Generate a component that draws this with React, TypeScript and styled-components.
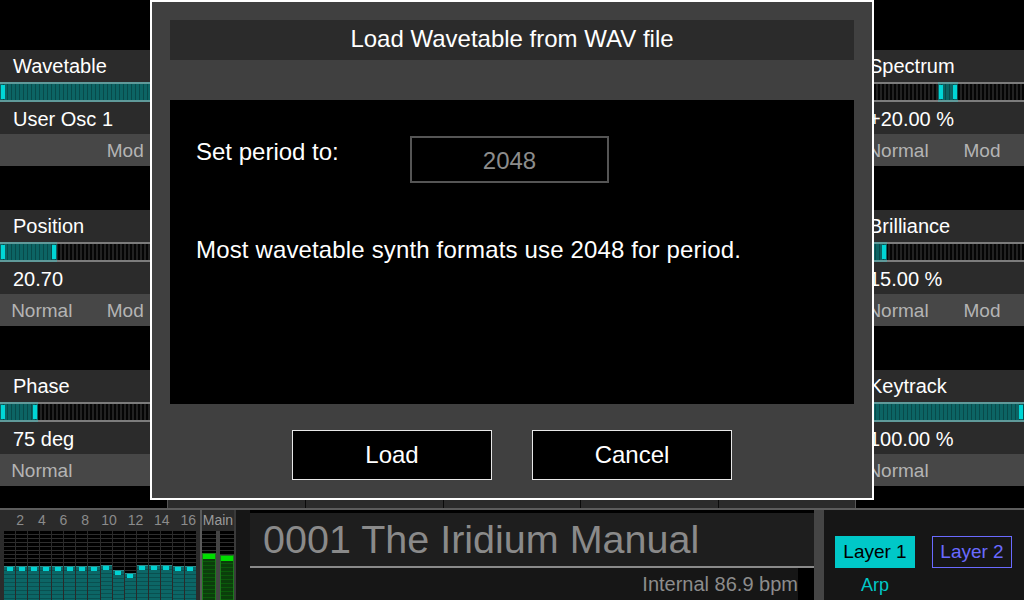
import React from "react";
import styled, { createGlobalStyle, css } from "styled-components";

const GlobalStyle = createGlobalStyle`
  html, body { margin: 0; padding: 0; background: #000; }
  body { font-family: "Liberation Sans", Arial, sans-serif; overflow: hidden; }
  * { box-sizing: border-box; }
`;

const Screen = styled.div`
  position: relative;
  width: 1024px;
  height: 600px;
  overflow: hidden;
  background: #000;
  color: #fff;
  display: flex;
  flex-direction: column;
`;

const Upper = styled.div`
  height: 508px;
  display: grid;
  grid-template-columns: 167px 1fr 168px;
`;

const ParamColumn = styled.div`
  display: flex;
  flex-direction: column;
  gap: 44px;
  padding-top: 50px;
`;

const ParamBlock = styled.div`
  display: flex;
  flex-direction: column;
`;

const TextRow = styled.div<{ $shift?: number }>`
  height: 32px;
  line-height: ${(p) => 32 + (p.$shift ?? 0) * 2}px;
  padding-left: 13px;
  font-size: 20px;
  color: #fff;
  background: #2b2b2b;
  white-space: nowrap;
  overflow: hidden;
`;

const ModRow = styled.div`
  height: 32px;
  display: grid;
  grid-template-columns: 1fr 1fr;
  background: #474747;
  overflow: hidden;
`;

const ModCell = styled.span`
  text-align: center;
  line-height: 34px;
  font-size: 19px;
  color: #b4b4b4;
  white-space: nowrap;
`;

const Track = styled.div`
  position: relative;
  height: 20px;
  border-top: 2px solid #7c7c7c;
  border-bottom: 2px solid #7c7c7c;
  background: repeating-linear-gradient(90deg, #222 0 2px, #050505 2px 4px);
`;

const markerBase = css`
  content: "";
  position: absolute;
  top: 1px;
  bottom: 1px;
  width: 4px;
  background: #00d6d6;
`;

const Fill = styled.div<{ $start?: boolean; $end?: boolean }>`
  position: absolute;
  top: -2px;
  bottom: -2px;
  border-top: 2px solid #5f9a9a;
  border-bottom: 2px solid #5f9a9a;
  background: repeating-linear-gradient(90deg, #0c6464 0 3px, #084a4a 3px 4px);
  ${(p) =>
    p.$start &&
    css`
      &::before {
        ${markerBase};
        left: 1px;
      }
    `}
  ${(p) =>
    p.$end &&
    css`
      &::after {
        ${markerBase};
        right: 1px;
      }
    `}
`;

const MidArea = styled.div`
  display: grid;
  grid-template-columns: repeat(5, 1fr);
  border-left: 1px solid #555;
  border-right: 1px solid #555;
`;

const MidPanel = styled.div`
  background: #2b2b2b;
  & + & {
    border-left: 1px solid #0a0a0a;
  }
`;

const Divider = styled.div`
  height: 2px;
  background: #5c5c5c;
`;

const BottomBar = styled.div`
  height: 90px;
  display: flex;
`;

const MeterSection = styled.div`
  display: flex;
  background: #2b2b2b;
`;

const ChannelBlock = styled.div`
  width: 200px;
  padding: 0 4px;
  display: flex;
  flex-direction: column;
`;

const MeterLabels = styled.div<{ $cols: number }>`
  height: 21px;
  display: grid;
  grid-template-columns: repeat(${(p) => p.$cols}, 1fr);
  font-size: 14px;
  line-height: 21px;
  color: #8c8c8c;
  text-align: center;
  white-space: nowrap;
`;

const MeterBars = styled.div<{ $cols: number; $gap: number; $gapColor: string }>`
  flex: 1;
  display: grid;
  grid-template-columns: repeat(${(p) => p.$cols}, 1fr);
  gap: ${(p) => p.$gap}px;
  background: ${(p) => p.$gapColor};
`;

const Meter = styled.div`
  position: relative;
  background: repeating-linear-gradient(180deg, #000 0 3px, #2e2e2e 3px 4px);
`;

const ChannelFill = styled.div`
  position: absolute;
  left: 0;
  right: 0;
  bottom: 0;
  border-top: 1px solid #2a8a8a;
  background: repeating-linear-gradient(180deg, #0c6666 0 3px, #095050 3px 4px);
  &::before {
    content: "";
    position: absolute;
    top: 0;
    left: 50%;
    width: 6px;
    height: 4px;
    transform: translateX(-50%);
    background: #00d2d2;
  }
`;

const MainFill = styled.div`
  position: absolute;
  left: 0;
  right: 0;
  bottom: 0;
  border: 1px solid #1c7a1c;
  border-bottom: none;
  background: repeating-linear-gradient(180deg, #0b3e0b 0 3px, #0a5a0a 3px 4px);
  &::before {
    content: "";
    position: absolute;
    top: 0;
    left: 0;
    right: 0;
    height: 5px;
    background: #00dc00;
  }
`;

const MainBlock = styled.div`
  width: 36px;
  border-left: 2px solid #5a5a5a;
  border-right: 2px solid #3a3a3a;
  display: flex;
  flex-direction: column;
`;

const MainLabel = styled.div`
  height: 21px;
  line-height: 21px;
  font-size: 14px;
  color: #9a9a9a;
  text-align: center;
`;

const Display = styled.div`
  width: 578px;
  background: #161616;
  padding-left: 14px;
  display: flex;
  flex-direction: column;
`;

const NameBox = styled.div`
  height: 58px;
  border-top: 3px solid #000;
  border-bottom: 2px solid #8a8a8a;
  background: #1e1e1e;
  padding-left: 13px;
  font-size: 39.5px;
  line-height: 53px;
  color: #8a8a8a;
  white-space: nowrap;
`;

const BpmRow = styled.div`
  flex: 1;
  display: flex;
  justify-content: flex-end;
`;

const BpmText = styled.span`
  font-size: 20px;
  line-height: 32px;
  color: #8c8c8c;
`;

const BpmEnd = styled.div`
  width: 16px;
  background: #000;
`;

const GrayBar = styled.div`
  width: 10px;
  background: #454545;
`;

const LayerSection = styled.div`
  flex: 1;
  background: #161616;
  padding: 26px 0 0 11px;
`;

const LayerRow = styled.div`
  display: flex;
  gap: 17px;
`;

const LayerButton = styled.div<{ $active?: boolean }>`
  width: 80px;
  height: 32px;
  font-size: 19px;
  text-align: center;
  white-space: nowrap;
  ${(p) =>
    p.$active
      ? css`
          background: #00c8c8;
          color: #000;
          line-height: 32px;
        `
      : css`
          border: 1px solid #6a6aff;
          color: #6a6aff;
          line-height: 30px;
        `}
`;

const ArpLabel = styled.div`
  width: 80px;
  margin-top: 6px;
  text-align: center;
  font-size: 18px;
  line-height: 22px;
  color: #00c8c8;
`;

const Dialog = styled.div`
  position: absolute;
  left: 150px;
  top: 0;
  width: 724px;
  height: 500px;
  border: 2px solid #fff;
  background: #404040;
  padding: 18px 18px 0;
  display: flex;
  flex-direction: column;
`;

const DialogTitle = styled.div`
  height: 40px;
  background: #2b2b2b;
  text-align: center;
  font-size: 24px;
  line-height: 38px;
  color: #fff;
`;

const DialogContent = styled.div`
  margin-top: 40px;
  height: 304px;
  background: #000;
  padding: 36px 26px;
  font-size: 24px;
  color: #fff;
`;

const PeriodRow = styled.div`
  display: flex;
  align-items: flex-start;
`;

const PeriodLabel = styled.div`
  width: 214px;
  margin-top: 1px;
  line-height: 30px;
`;

const PeriodInput = styled.div`
  width: 199px;
  height: 47px;
  border: 2px solid #555;
  text-align: center;
  line-height: 46px;
  color: #8c8c8c;
`;

const InfoText = styled.div`
  margin-top: 52px;
  line-height: 30px;
  white-space: nowrap;
  letter-spacing: 0.15px;
`;

const ButtonRow = styled.div`
  margin-top: 26px;
  display: flex;
  justify-content: center;
  gap: 40px;
`;

const DialogButton = styled.div`
  width: 200px;
  height: 50px;
  border: 1px solid #e8e8e8;
  background: #000;
  color: #fff;
  font-size: 24px;
  line-height: 47px;
  text-align: center;
`;

type Param = {
  label: string;
  value: string;
  from: number;
  to: number;
  start: boolean;
  end: boolean;
  normal: boolean;
  mod: boolean;
};

const leftParams: Param[] = [
  { label: "Wavetable", value: "User Osc 1", from: 0, to: 1, start: true, end: false, normal: false, mod: true },
  { label: "Position", value: "20.70", from: 0, to: 0.341, start: true, end: true, normal: true, mod: true },
  { label: "Phase", value: "75 deg", from: 0, to: 0.228, start: true, end: true, normal: true, mod: false },
];

const rightParams: Param[] = [
  { label: "Spectrum", value: "+20.00 %", from: 0.488, to: 0.607, start: true, end: true, normal: true, mod: true },
  { label: "Brilliance", value: "15.00 %", from: 0, to: 0.185, start: true, end: true, normal: true, mod: true },
  { label: "Keytrack", value: "100.00 %", from: 0, to: 1, start: false, end: true, normal: true, mod: false },
];

const channelLevels = [34, 34, 34, 34, 34, 34, 34, 34, 35, 30, 27, 35, 35, 35, 34, 34];
const mainLevels = [47, 45];

function ParamView({ p }: { p: Param }) {
  return (
    <ParamBlock>
      <TextRow>{p.label}</TextRow>
      <Track>
        <Fill
          $start={p.start}
          $end={p.end}
          style={{ left: `${p.from * 100}%`, width: `${(p.to - p.from) * 100}%` }}
        />
      </Track>
      <TextRow $shift={1}>{p.value}</TextRow>
      <ModRow>
        <ModCell>{p.normal ? "Normal" : ""}</ModCell>
        <ModCell>{p.mod ? "Mod" : ""}</ModCell>
      </ModRow>
    </ParamBlock>
  );
}

export default function App() {
  return (
    <>
      <GlobalStyle />
      <Screen>
        <Upper>
          <ParamColumn>
            {leftParams.map((p) => (
              <ParamView key={p.label} p={p} />
            ))}
          </ParamColumn>
          <MidArea>
            {[0, 1, 2, 3, 4].map((i) => (
              <MidPanel key={i} />
            ))}
          </MidArea>
          <ParamColumn>
            {rightParams.map((p) => (
              <ParamView key={p.label} p={p} />
            ))}
          </ParamColumn>
        </Upper>
        <Divider />
        <BottomBar>
          <MeterSection>
            <ChannelBlock>
              <MeterLabels $cols={16}>
                {channelLevels.map((_, i) => (
                  <span key={i}>{i % 2 === 1 ? i + 1 : ""}</span>
                ))}
              </MeterLabels>
              <MeterBars $cols={16} $gap={1} $gapColor="#2a2a2a">
                {channelLevels.map((h, i) => (
                  <Meter key={i}>
                    <ChannelFill style={{ height: `${h}px` }} />
                  </Meter>
                ))}
              </MeterBars>
            </ChannelBlock>
            <MainBlock>
              <MainLabel>Main</MainLabel>
              <MeterBars $cols={2} $gap={4} $gapColor="#444">
                {mainLevels.map((h, i) => (
                  <Meter key={i}>
                    <MainFill style={{ height: `${h}px` }} />
                  </Meter>
                ))}
              </MeterBars>
            </MainBlock>
          </MeterSection>
          <Display>
            <NameBox>0001 The Iridium Manual</NameBox>
            <BpmRow>
              <BpmText>Internal 86.9 bpm</BpmText>
              <BpmEnd />
            </BpmRow>
          </Display>
          <GrayBar />
          <LayerSection>
            <LayerRow>
              <LayerButton $active>Layer 1</LayerButton>
              <LayerButton>Layer 2</LayerButton>
            </LayerRow>
            <ArpLabel>Arp</ArpLabel>
          </LayerSection>
        </BottomBar>
        <Dialog>
          <DialogTitle>Load Wavetable from WAV file</DialogTitle>
          <DialogContent>
            <PeriodRow>
              <PeriodLabel>Set period to:</PeriodLabel>
              <PeriodInput>2048</PeriodInput>
            </PeriodRow>
            <InfoText>Most wavetable synth formats use 2048 for period.</InfoText>
          </DialogContent>
          <ButtonRow>
            <DialogButton>Load</DialogButton>
            <DialogButton>Cancel</DialogButton>
          </ButtonRow>
        </Dialog>
      </Screen>
    </>
  );
}
